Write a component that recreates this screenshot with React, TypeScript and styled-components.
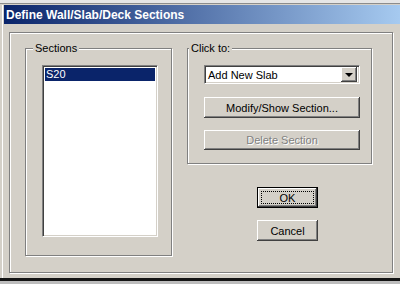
import styled, { createGlobalStyle } from "styled-components";

const GlobalStyle = createGlobalStyle`
  html, body {
    margin: 0;
    padding: 0;
    background: #d4d0c8;
  }
  body {
    font-family: "Liberation Sans", Arial, sans-serif;
    font-size: 11px;
  }
`;

const Window = styled.div`
  width: 400px;
  height: 284px;
  display: flex;
  flex-direction: column;
  overflow: hidden;
  background: linear-gradient(
    to right,
    #d4d0c8 0 2px,
    #ffffff 2px 3px,
    #d4d0c8 3px
  );
`;

const TopStrip = styled.div`
  height: 5px;
  flex-shrink: 0;
  background: linear-gradient(#e6e6e6 0 3px, #8c8c8c 3px 4px, #d4d0c8 4px);
`;

const Main = styled.div`
  margin-left: 4px;
  display: flex;
  flex-direction: column;
`;

const TitleBar = styled.div`
  height: 19px;
  display: flex;
  align-items: center;
  padding-left: 2px;
  background: linear-gradient(to right, #0a246a, #a6caf0);
  color: #fff;
  font-weight: bold;
  font-size: 12px;
`;

const Body = styled.div`
  background: #d4d0c8;
  padding: 8px 7px 5px 5px;
`;

const Frame = styled.div`
  box-sizing: border-box;
  height: 241px;
  border: 1px solid #808080;
  box-shadow: inset 1px 1px #fff, 1px 1px #fff;
  padding: 15px 0 0 15px;
  display: flex;
  gap: 15px;
  align-items: flex-start;
`;

const GroupBox = styled.div<{ $w: number; $h: number }>`
  position: relative;
  box-sizing: border-box;
  width: ${({ $w }) => $w}px;
  height: ${({ $h }) => $h}px;
  border: 1px solid #808080;
  box-shadow: inset 1px 1px #fff, 1px 1px #fff;
  padding: 16px 0 0 16px;
  display: flex;
  flex-direction: column;
  align-items: flex-start;
`;

const Caption = styled.span<{ $left: number }>`
  position: absolute;
  top: -7px;
  left: ${({ $left }) => $left}px;
  padding: 0 2px;
  line-height: 13px;
  background: #d4d0c8;
  color: #000;
`;

const sunken = `
  border-top: 1px solid #808080;
  border-left: 1px solid #808080;
  border-bottom: 1px solid #fff;
  border-right: 1px solid #fff;
  box-shadow: inset 1px 1px #404040, inset -1px -1px #d4d0c8;
`;

const ListBox = styled.div`
  box-sizing: border-box;
  width: 116px;
  height: 172px;
  background: #fff;
  padding: 2px;
  ${sunken}
`;

const ListItem = styled.div<{ $selected?: boolean }>`
  height: 13px;
  line-height: 13px;
  padding-left: 1px;
  background: ${({ $selected }) => ($selected ? "#0a246a" : "transparent")};
  color: ${({ $selected }) => ($selected ? "#fff" : "#000")};
`;

const RightColumn = styled.div`
  display: flex;
  flex-direction: column;
  align-items: flex-start;
`;

const Combo = styled.div`
  box-sizing: border-box;
  width: 156px;
  height: 19px;
  background: #fff;
  padding: 2px 2px 2px 3px;
  display: flex;
  align-items: center;
  justify-content: space-between;
  ${sunken}
`;

const raised = `
  background: #d4d0c8;
  box-shadow: inset -1px -1px #404040, inset 1px 1px #fff,
    inset -2px -2px #808080, inset 2px 2px #d4d0c8;
`;

const DropButton = styled.div`
  width: 16px;
  height: 15px;
  display: flex;
  align-items: center;
  justify-content: center;
  ${raised}
`;

const Arrow = styled.span`
  width: 0;
  height: 0;
  border-left: 4px solid transparent;
  border-right: 4px solid transparent;
  border-top: 4px solid #000;
  margin-top: 1px;
`;

const Button = styled.button<{
  $w: number;
  $h: number;
  $mt: number;
  $ml?: number;
  $default?: boolean;
}>`
  position: relative;
  box-sizing: border-box;
  width: ${({ $w }) => $w}px;
  height: ${({ $h }) => $h}px;
  margin-top: ${({ $mt }) => $mt}px;
  margin-left: ${({ $ml }) => $ml ?? 0}px;
  padding: 0;
  font-family: "Liberation Sans", Arial, sans-serif;
  font-size: 11px;
  color: #000;
  border: ${({ $default }) => ($default ? "1px solid #000" : "none")};
  ${raised}

  &:disabled {
    color: #808080;
    text-shadow: 1px 1px #fff;
  }
`;

const FocusRect = styled.span`
  position: absolute;
  inset: 3px;
  border: 1px dotted #000;
`;

const BottomBar = styled.div`
  height: 6px;
  flex-shrink: 0;
  background: linear-gradient(#141414 0 3px, #bdbdbd 3px);
`;

const App = () => {
  return (
    <>
      <GlobalStyle />
      <Window>
        <TopStrip />
        <Main>
          <TitleBar>Define Wall/Slab/Deck Sections</TitleBar>
          <Body>
            <Frame>
              <GroupBox $w={147} $h={208}>
                <Caption $left={7}>Sections</Caption>
                <ListBox>
                  <ListItem $selected>S20</ListItem>
                </ListBox>
              </GroupBox>
              <RightColumn>
                <GroupBox $w={185} $h={116}>
                  <Caption $left={1}>Click to:</Caption>
                  <Combo>
                    <span>Add New Slab</span>
                    <DropButton>
                      <Arrow />
                    </DropButton>
                  </Combo>
                  <Button $w={156} $h={21} $mt={13}>
                    Modify/Show Section...
                  </Button>
                  <Button $w={156} $h={20} $mt={12} disabled>
                    Delete Section
                  </Button>
                </GroupBox>
                <Button $w={61} $h={21} $mt={23} $ml={70} $default>
                  <FocusRect />
                  OK
                </Button>
                <Button $w={61} $h={21} $mt={12} $ml={70}>
                  Cancel
                </Button>
              </RightColumn>
            </Frame>
          </Body>
        </Main>
        <BottomBar />
      </Window>
    </>
  );
};

export default App;
